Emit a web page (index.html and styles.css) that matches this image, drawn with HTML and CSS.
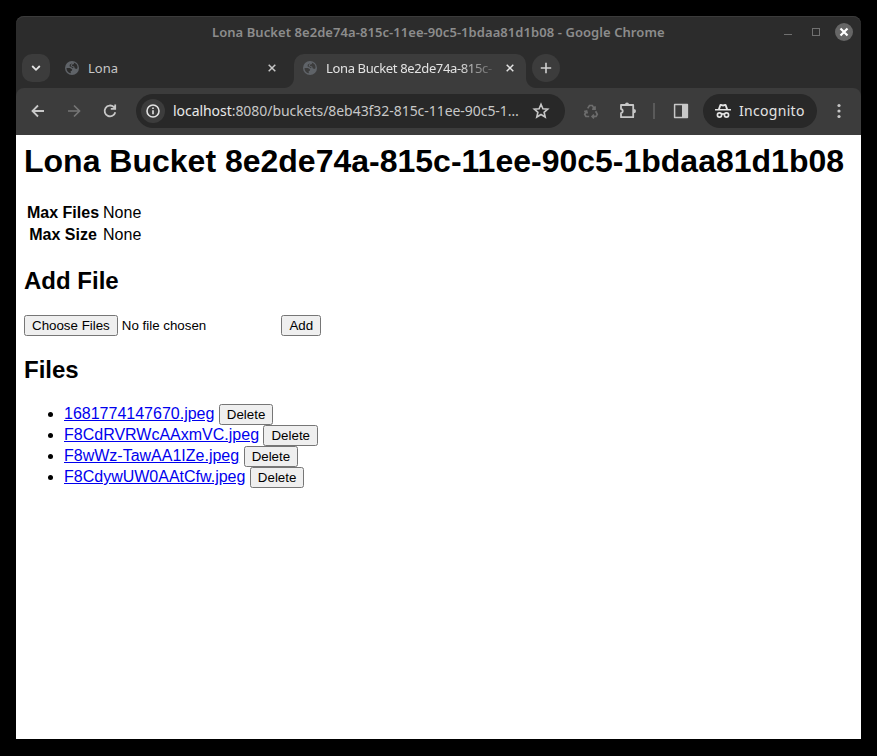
FILE: index.html
```html
<!DOCTYPE html>
<html lang="en">
<head>
<meta charset="utf-8">
<title>Lona Bucket</title>
<link rel="stylesheet" href="styles.css">
</head>
<body>
<svg class="defs" aria-hidden="true">
  <symbol id="globe" viewBox="0 0 14 14">
    <circle cx="7" cy="7" r="7" fill="#5f6368"/>
    <path fill="var(--globe-cut)" d="M8.800 1.600L9 3.100 6.900 3.800 7.100 5.100 9.200 5.600 9.700 7.200 11.200 8 12.500 7.300A5.500 5.500 0 0 0 8.800 1.600ZM7.300 2.300L4.900 3.600 4.500 5.300 6.500 6.200 7.800 7.200 8.600 6.600 6 5.200 5.800 3.900ZM1.500 7H5L7.200 8.500 6.800 9.700 5.600 10.300 5.900 12.300A5.500 5.500 0 0 1 1.500 7Z"/>
  </symbol>
  <symbol id="close" viewBox="0 0 8 8"><path d="M.7.7l6.600 6.600M7.300.7L.7 7.300" stroke="currentColor" stroke-width="1.500"/></symbol>
</svg>
<div class="window">
  <header class="titlebar">
    <span class="caption">Lona Bucket 8e2de74a-815c-11ee-90c5-1bdaa81d1b08 - Google Chrome</span>
    <div class="controls">
      <i class="minimize"></i><i class="maximize"></i>
      <span class="quit"><svg width="10" height="10" viewBox="0 0 10 10"><path d="M1.500 1.500l7 7M8.500 1.500l-7 7" stroke="#fff" stroke-width="2.200"/></svg></span>
    </div>
  </header>
  <nav class="tabs">
    <span class="tab-search"><svg width="10" height="8" viewBox="0 0 10 8"><path d="M1.200 2L5 5.800 8.800 2" fill="none" stroke="#e3e3e3" stroke-width="1.800"/></svg></span>
    <div class="tab idle">
      <svg class="favicon"><use href="#globe"/></svg>
      <span class="tab-title">Lona</span>
      <svg class="tab-close"><use href="#close"/></svg>
    </div>
    <div class="tab active">
      <svg class="favicon"><use href="#globe"/></svg>
      <span class="tab-title">Lona Bucket 8e2de74a-815c-</span>
      <svg class="tab-close"><use href="#close"/></svg>
    </div>
    <span class="new-tab"><svg width="12" height="12" viewBox="0 0 12 12"><path d="M6 .8v10.400M.8 6h10.400" stroke="#d0d0d0" stroke-width="1.600"/></svg></span>
  </nav>
  <div class="toolbar">
    <svg class="nav-icon" viewBox="0 0 18 18"><path d="M15 9H4M9 3.500L3.500 9 9 14.500" fill="none" stroke="#c7c7c7" stroke-width="1.800"/></svg>
    <svg class="nav-icon" viewBox="0 0 18 18"><path d="M3 9h11M9 3.500L14.500 9 9 14.500" fill="none" stroke="#757575" stroke-width="1.700"/></svg>
    <svg class="nav-icon" viewBox="0 0 18 18"><path d="M14.300 10.200A5.400 5.400 0 1 1 12.800 5L14 6.300M14.200 2.500V6.800H9.800" fill="none" stroke="#c7c7c7" stroke-width="1.800"/></svg>
    <div class="address">
      <span class="site-info"><svg width="14" height="14" viewBox="0 0 14 14"><circle cx="7" cy="7" r="6" fill="none" stroke="#e3e3e3" stroke-width="1.600"/><path d="M7 6.200v4M7 3.500v1.600" stroke="#e3e3e3" stroke-width="1.600"/></svg></span>
      <span class="url"><b>localhost</b>:8080/buckets/8eb43f32-815c-11ee-90c5-1…</span>
      <svg width="18" height="18" viewBox="0 0 18 18"><path d="M9 2.300l1.900 4.400 4.800.4-3.600 3.200 1.100 4.700L9 12.500 4.800 15l1.100-4.700L2.300 7.100l4.800-.4z" fill="none" stroke="#c7c7c7" stroke-width="1.600"/></svg>
    </div>
    <div class="extensions">
      <svg width="18" height="18" viewBox="0 0 18 18" fill="none" stroke="#6c6c6c" stroke-width="1.700"><path d="M5.700 6.400L7.500 3.500h2.800l1.800 2.900M13 4.200v2.900h-2.900M13.600 9.300l1.700 2.900-1.200 2.300H10.800M12 12.600l-1.900 1.900 1.900 1.900M7.200 14.500H3.900l-1.200-2.300 1.700-2.800M2.100 9.500l2.500-.6.700 2.600"/></svg>
      <svg width="20" height="20" viewBox="0 0 20 20"><path fill="none" stroke="#c7c7c7" stroke-width="1.800" stroke-linejoin="round" d="M3 4h12.200v12.200H3v-4c2.400-.5 2.400-3.700 0-4.200z"/><path fill="#c7c7c7" d="M7 3.500a2 2 0 0 1 4 0zM15.800 7.900a2.200 2.200 0 0 1 0 4.400z"/></svg>
      <i class="divider"></i>
      <svg width="16" height="16" viewBox="0 0 16 16"><path fill="none" stroke="#c7c7c7" stroke-width="1.500" stroke-linejoin="round" d="M1.600 1.600h12.800v12.800H1.600z"/><path fill="#c7c7c7" d="M9 1h5.500v14H9z"/></svg>
    </div>
    <div class="incognito">
      <svg width="16" height="16" viewBox="0 0 16 16"><path fill="#e3e3e3" fill-rule="evenodd" d="M3 6l1.500-4.300C4.700 1 5.300.8 6 1l2 .5L10 1c.7-.2 1.300 0 1.500.7L13 6h3v1.600H0V6zM5 6h6L10 2.900l-2 .5-2-.5z"/><path fill="none" stroke="#e3e3e3" stroke-width="1.700" d="M6.800 11.500c.7-.7 1.700-.7 2.400 0"/><circle cx="4.500" cy="12" r="2.100" fill="none" stroke="#e3e3e3" stroke-width="1.700"/><circle cx="11.500" cy="12" r="2.100" fill="none" stroke="#e3e3e3" stroke-width="1.700"/></svg>
      <span>Incognito</span>
    </div>
    <svg class="menu" width="4" height="16" viewBox="0 0 4 16" fill="#c7c7c7"><circle cx="2" cy="2.500" r="1.600"/><circle cx="2" cy="8" r="1.600"/><circle cx="2" cy="13.500" r="1.600"/></svg>
  </div>
  <main class="page">
    <h1>Lona Bucket 8e2de74a-815c-11ee-90c5-1bdaa81d1b08</h1>
    <table>
      <tr><th>Max Files</th><td>None</td></tr>
      <tr><th>Max Size</th><td>None</td></tr>
    </table>
    <h2>Add File</h2>
    <form><input type="file" multiple> <button type="button">Add</button></form>
    <h2>Files</h2>
    <ul>
      <li><a href="#">1681774147670.jpeg</a> <button type="button">Delete</button></li>
      <li><a href="#">F8CdRVRWcAAxmVC.jpeg</a> <button type="button">Delete</button></li>
      <li><a href="#">F8wWz-TawAA1IZe.jpeg</a> <button type="button">Delete</button></li>
      <li><a href="#">F8CdywUW0AAtCfw.jpeg</a> <button type="button">Delete</button></li>
    </ul>
  </main>
</div>
</body>
</html>
```
FILE: styles.css
```css
* { box-sizing: border-box; }
body { margin: 0; padding: 16px 16px 17px; height: 756px; background: #000; overflow: hidden; }
.defs { display: none; }
svg { flex: none; display: block; }
.window { height: 723px; display: flex; flex-direction: column; border-radius: 8px 8px 0 0; overflow: hidden; background: #2c2c2c; box-shadow: inset 0 1px #3b3b3b; font-family: "Noto Sans", sans-serif; white-space: nowrap; }

.titlebar { height: 32px; flex: none; display: grid; grid-template-columns: 196px 1fr auto; align-items: center; padding-right: 8px; }
.caption { grid-column: 2; font-size: 13px; font-weight: 600; line-height: 20px; color: #8c8c8c; letter-spacing: .065px; }
.controls { display: flex; align-items: center; }
.minimize { width: 8px; height: 1px; margin: 5px 20px 0 0; background: #707070; }
.maximize { width: 8px; height: 8px; margin-right: 15px; border: 1px solid #707070; }
.quit { width: 18px; height: 18px; border-radius: 50%; background: #666; display: grid; place-items: center; }

.tabs { height: 40px; flex: none; display: flex; padding: 6px 0 0 6px; }
.tab-search, .new-tab { width: 28px; height: 28px; border-radius: 10px; background: #3c3c3c; display: grid; place-items: center; }
.new-tab { border-radius: 50%; margin-left: 6px; }
.tab { height: 34px; display: flex; align-items: center; padding-bottom: 6px; font-size: 13px; }
.idle { width: 244px; padding-left: 15px; padding-right: 18px; color: #c7c7c7; --globe-cut: #2c2c2c; }
.active { position: relative; width: 232px; padding-left: 9px; padding-right: 12px; border-radius: 10px 10px 0 0; background: #3c3c3c; color: #e3e3e3; --globe-cut: #3c3c3c; }
.active::before, .active::after { content: ""; position: absolute; bottom: 0; width: 10px; height: 10px; }
.active::before { right: 100%; background: radial-gradient(circle at 0 0, transparent 9.5px, #3c3c3c 10.5px); }
.active::after { left: 100%; background: radial-gradient(circle at 100% 0, transparent 9.5px, #3c3c3c 10.5px); }
.favicon { width: 14px; height: 14px; margin-right: 9px; }
.tab-title { flex: 1; min-width: 0; line-height: 20px; }
.active .tab-title { letter-spacing: -.36px; margin-right: 14px; -webkit-mask-image: linear-gradient(90deg, #000 80%, rgba(0, 0, 0, .2)); mask-image: linear-gradient(90deg, #000 80%, rgba(0, 0, 0, .2)); }
.tab-close { width: 8px; height: 8px; }

.toolbar { height: 47px; flex: none; display: flex; align-items: center; background: #3c3c3c; border-radius: 8px 8px 0 0; padding: 0 0 1px 13px; }
.nav-icon { width: 18px; height: 18px; margin-right: 18px; }
.address { width: 429px; height: 34px; margin-left: -1px; border-radius: 17px; background: #282828; display: flex; align-items: center; padding: 0 15px 0 5px; }
.site-info { width: 24px; height: 24px; border-radius: 50%; background: #3c3c3c; display: grid; place-items: center; margin-right: 8px; }
.url { flex: 1; font-size: 14px; line-height: 22px; color: #c7c7c7; letter-spacing: -.05px; }
.url b { font-weight: 400; color: #e9e9e9; }
.extensions { display: flex; align-items: center; margin-left: 17px; }
.extensions svg:nth-child(2) { margin-left: 18px; }
.divider { width: 2px; height: 16px; background: #5a5a5a; margin: 0 18px 0 15px; }
.incognito { width: 114px; height: 34px; margin-left: 14px; border-radius: 17px; background: #282828; display: flex; align-items: center; gap: 8px; padding-left: 12px; font-size: 14px; line-height: 22px; letter-spacing: .3px; color: #e3e3e3; }
.menu { margin-left: 20px; }

.page { flex: 1; background: #fff; color: #000; padding: 8px; font: 16px "Liberation Sans", Arial, sans-serif; }
h1 { margin: 0 0 21.44px; font-size: 32px; }
h2 { margin: 19.92px 0; font-size: 24px; }
form { margin: 0; }
ul { margin: 0; padding-left: 40px; }
a { color: #00e; }
button, input { font-family: "Liberation Sans", Arial, sans-serif; font-size: 13.3333px; }
```
